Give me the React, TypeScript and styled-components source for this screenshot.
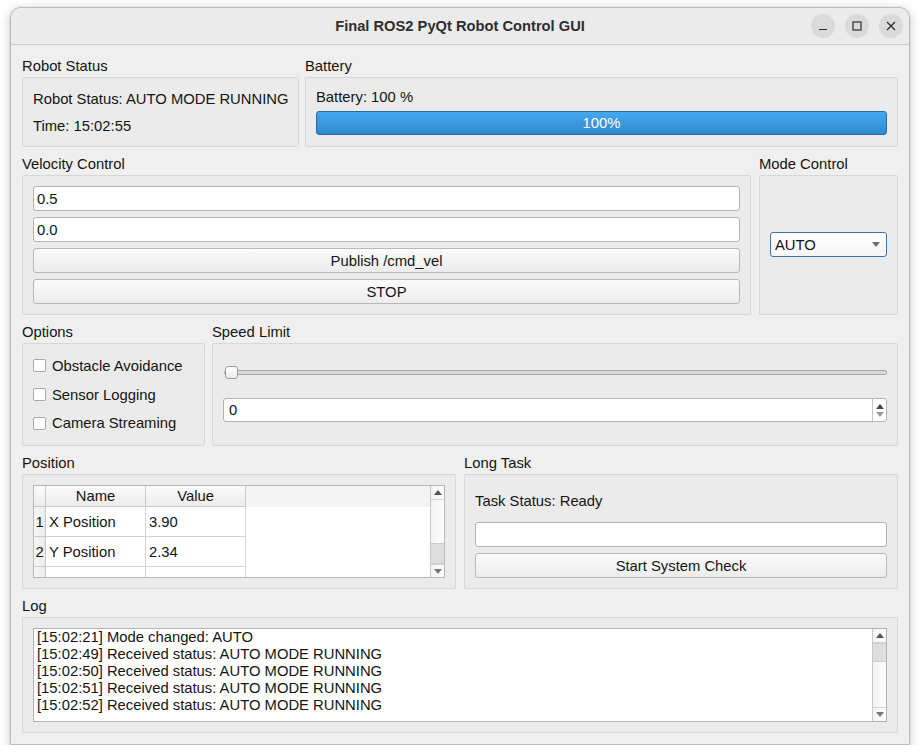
import React from "react";
import styled, { createGlobalStyle } from "styled-components";

const FONT = `"Liberation Sans", Arial, sans-serif`;

const Global = createGlobalStyle`
  html, body { margin: 0; padding: 0; background: #ffffff; }
  body { font-family: ${FONT}; font-size: 14.8px; color: #141414; }
  * { box-sizing: border-box; }
`;

const Window = styled.div`
  margin: 7px 0 0 10px;
  width: 900px;
  border: 1px solid #bcbcbc;
  border-radius: 11px 11px 0 0;
  background: #efefef;
  box-shadow: 0 3px 12px rgba(0, 0, 0, 0.22), 0 0 2px rgba(0, 0, 0, 0.12);
  overflow: hidden;
`;

const TitleBar = styled.div`
  height: 37px;
  border-bottom: 1px solid #c9c9c9;
  background: #ebebeb;
  display: grid;
  grid-template-columns: 1fr auto 1fr;
  align-items: center;
  padding: 0 6px;
`;

const Title = styled.div`
  grid-column: 2;
  font-weight: bold;
  font-size: 14.7px;
  color: #2e2e2e;
`;

const Controls = styled.div`
  grid-column: 3;
  justify-self: end;
  display: flex;
  gap: 10px;
`;

const CtrlButton = styled.div`
  width: 24px;
  height: 24px;
  border-radius: 50%;
  background: #dadada;
  display: flex;
  align-items: center;
  justify-content: center;
`;

const Content = styled.div`
  padding: 12px 11px 11px;
  display: flex;
  flex-direction: column;
  gap: 8px;
`;

const Row = styled.div<{ $cols: string; $gap: number }>`
  display: grid;
  grid-template-columns: ${(p) => p.$cols};
  column-gap: ${(p) => p.$gap}px;
`;

const Group = styled.div`
  display: grid;
  grid-template-rows: 20px auto;
  min-width: 0;
`;

const GroupTitle = styled.div`
  line-height: 18px;
  height: 20px;
  white-space: nowrap;
`;

const Frame = styled.div<{ $h: number }>`
  height: ${(p) => p.$h}px;
  border: 1px solid #d7d7d7;
  border-radius: 2px;
  background: #ebebeb;
  padding: 10px;
  display: flex;
  flex-direction: column;
`;

const StatusFrame = styled(Frame)`
  gap: 5px;
`;

const TextLine = styled.div<{ $lh: number }>`
  line-height: ${(p) => p.$lh}px;
  white-space: nowrap;
`;

const Progress = styled.div`
  margin-top: 5px;
  height: 24px;
  border: 1px solid #2a6aa2;
  border-radius: 3px;
  background: linear-gradient(to bottom, #45a8ef, #2f8ad1);
  color: #ffffff;
  display: flex;
  align-items: center;
  justify-content: center;
`;

const VelocityFrame = styled(Frame)`
  gap: 6px;
`;

const LineEdit = styled.div`
  height: 25px;
  flex: none;
  border: 1px solid #b3b3b3;
  border-radius: 3px;
  background: #ffffff;
  padding-left: 3px;
  display: flex;
  align-items: center;
`;

const PushButton = styled.button`
  height: 25px;
  flex: none;
  border: 1px solid #b8b8b8;
  border-radius: 3px;
  background: linear-gradient(to bottom, #fbfbfb, #ececec);
  font-family: inherit;
  font-size: inherit;
  color: #141414;
  padding: 0;
`;

const ModeFrame = styled(Frame)`
  justify-content: center;
  padding: 0 10px;
`;

const Combo = styled.div`
  width: 117px;
  height: 25px;
  margin-top: -1px;
  border: 1px solid #3a76b3;
  border-radius: 3px;
  background: linear-gradient(to bottom, #ffffff, #f6f6f6);
  display: flex;
  align-items: center;
  justify-content: space-between;
  padding: 0 6px 0 4px;
`;

const OptionsFrame = styled(Frame)`
  gap: 5px;
`;

const CheckRow = styled.div`
  height: 24px;
  display: flex;
  align-items: center;
  white-space: nowrap;
`;

const CheckBox = styled.span`
  width: 13px;
  height: 13px;
  border: 1px solid #a9a9a9;
  border-radius: 2px;
  background: #ffffff;
  margin-right: 6px;
  flex: none;
`;

const SliderArea = styled.div`
  height: 36px;
  display: flex;
  align-items: center;
  padding-left: 1px;
`;

const Groove = styled.div`
  position: relative;
  flex: 1;
  height: 5px;
  border: 1px solid #a9a9a9;
  border-radius: 2px;
  background: #d9d9d9;
`;

const Handle = styled.div`
  position: absolute;
  left: 0;
  top: -5px;
  width: 13px;
  height: 13px;
  border: 1px solid #9e9e9e;
  border-radius: 3px;
  background: linear-gradient(to bottom, #ffffff, #ececec);
`;

const SpinBox = styled.div`
  margin-top: 8px;
  height: 24px;
  border: 1px solid #b3b3b3;
  border-radius: 3px;
  background: #ffffff;
  display: flex;
`;

const SpinText = styled.div`
  flex: 1;
  padding-left: 5px;
  display: flex;
  align-items: center;
`;

const SpinButtons = styled.div`
  width: 14px;
  border-left: 1px solid #c4c4c4;
  display: flex;
  flex-direction: column;
  align-items: center;
  justify-content: center;
  gap: 3px;
`;

const TableBox = styled.div`
  height: 93px;
  border: 1px solid #b8b8b8;
  background: #ffffff;
  display: flex;
  overflow: hidden;
`;

const TableGrid = styled.div`
  flex: 1;
  display: grid;
  grid-template-columns: 12px 100px 100px 1fr;
  grid-template-rows: 21px 30px 30px 30px;
  overflow: hidden;
`;

const HeaderCell = styled.div<{ $fill?: boolean }>`
  background: ${(p) =>
    p.$fill ? "#f4f4f4" : "linear-gradient(to bottom, #fbfbfb, #ececec)"};
  border-right: ${(p) => (p.$fill ? "none" : "1px solid #c9c9c9")};
  border-bottom: ${(p) => (p.$fill ? "none" : "1px solid #c9c9c9")};
  display: flex;
  align-items: center;
  justify-content: center;
`;

const RowHeader = styled.div`
  background: linear-gradient(to right, #f7f7f7, #ececec);
  border-right: 1px solid #c9c9c9;
  border-bottom: 1px solid #c9c9c9;
  display: flex;
  align-items: center;
  justify-content: center;
`;

const Cell = styled.div<{ $empty?: boolean }>`
  background: #ffffff;
  border-right: ${(p) => (p.$empty ? "none" : "1px solid #d3d3d3")};
  border-bottom: ${(p) => (p.$empty ? "none" : "1px solid #d3d3d3")};
  padding-left: 3px;
  display: flex;
  align-items: center;
  white-space: nowrap;
`;

const ScrollTrack = styled.div`
  width: 14px;
  flex: none;
  border-left: 1px solid #c9c9c9;
  background: linear-gradient(to right, #f3f3f3, #fdfdfd);
  display: flex;
  flex-direction: column;
`;

const ScrollArrow = styled.div<{ $down?: boolean }>`
  height: 14px;
  flex: none;
  display: flex;
  align-items: center;
  justify-content: center;
  border-top: ${(p) => (p.$down ? "1px solid #d2d2d2" : "none")};
  border-bottom: ${(p) => (p.$down ? "none" : "1px solid #d2d2d2")};
`;

const ScrollSpace = styled.div`
  flex: 1;
  display: flex;
  flex-direction: column;
`;

const ScrollHandle = styled.div<{ $top: number; $h: number }>`
  margin-top: ${(p) => p.$top}px;
  height: ${(p) => p.$h}px;
  background: #dedede;
  border-top: 1px solid #cdcdcd;
  border-bottom: 1px solid #cdcdcd;
`;

const TaskFrame = styled(Frame)`
  padding: 15px 10px 10px;
`;

const TaskLabel = styled.div`
  line-height: 22px;
  margin-bottom: 10px;
`;

const TaskButton = styled(PushButton)`
  margin-top: 6px;
`;

const LogBox = styled.div`
  height: 94px;
  border: 1px solid #b3b3b3;
  background: #ffffff;
  display: flex;
`;

const LogText = styled.div`
  flex: 1;
  padding-left: 3px;
  line-height: 17px;
  white-space: nowrap;
  overflow: hidden;
`;

const Arrow = ({ down, color = "#555" }: { down?: boolean; color?: string }) => (
  <svg width="8" height="5" viewBox="0 0 8 5">
    <polygon points={down ? "0,0 8,0 4,5" : "0,5 8,5 4,0"} fill={color} />
  </svg>
);

const Scrollbar = ({ top, h }: { top: number; h: number }) => (
  <ScrollTrack>
    <ScrollArrow>
      <Arrow />
    </ScrollArrow>
    <ScrollSpace>
      <ScrollHandle $top={top} $h={h} />
    </ScrollSpace>
    <ScrollArrow $down>
      <Arrow down color="#777" />
    </ScrollArrow>
  </ScrollTrack>
);

const logLines = [
  "[15:02:21] Mode changed: AUTO",
  "[15:02:49] Received status: AUTO MODE RUNNING",
  "[15:02:50] Received status: AUTO MODE RUNNING",
  "[15:02:51] Received status: AUTO MODE RUNNING",
  "[15:02:52] Received status: AUTO MODE RUNNING",
];

export default function App() {
  return (
    <>
      <Global />
      <Window>
        <TitleBar>
          <Title>Final ROS2 PyQt Robot Control GUI</Title>
          <Controls>
            <CtrlButton>
              <svg width="10" height="10" viewBox="0 0 10 10">
                <line x1="1" y1="8.5" x2="9" y2="8.5" stroke="#2e2e2e" strokeWidth="1.2" />
              </svg>
            </CtrlButton>
            <CtrlButton>
              <svg width="10" height="10" viewBox="0 0 10 10">
                <rect x="1" y="1" width="8" height="8" fill="none" stroke="#2e2e2e" strokeWidth="1.2" />
              </svg>
            </CtrlButton>
            <CtrlButton>
              <svg width="10" height="10" viewBox="0 0 10 10">
                <path d="M1 1 L9 9 M9 1 L1 9" stroke="#2e2e2e" strokeWidth="1.3" />
              </svg>
            </CtrlButton>
          </Controls>
        </TitleBar>
        <Content>
          <Row $cols="277px 1fr" $gap={6}>
            <Group>
              <GroupTitle>Robot Status</GroupTitle>
              <StatusFrame $h={70}>
                <TextLine $lh={22}>Robot Status: AUTO MODE RUNNING</TextLine>
                <TextLine $lh={22}>Time: 15:02:55</TextLine>
              </StatusFrame>
            </Group>
            <Group>
              <GroupTitle>Battery</GroupTitle>
              <Frame $h={70}>
                <TextLine $lh={18}>Battery: 100 %</TextLine>
                <Progress>100%</Progress>
              </Frame>
            </Group>
          </Row>
          <Row $cols="1fr 139px" $gap={8}>
            <Group>
              <GroupTitle>Velocity Control</GroupTitle>
              <VelocityFrame $h={140}>
                <LineEdit>0.5</LineEdit>
                <LineEdit>0.0</LineEdit>
                <PushButton>Publish /cmd_vel</PushButton>
                <PushButton>STOP</PushButton>
              </VelocityFrame>
            </Group>
            <Group>
              <GroupTitle>Mode Control</GroupTitle>
              <ModeFrame $h={140}>
                <Combo>
                  <span>AUTO</span>
                  <Arrow down color="#6e6e6e" />
                </Combo>
              </ModeFrame>
            </Group>
          </Row>
          <Row $cols="183px 1fr" $gap={7}>
            <Group>
              <GroupTitle>Options</GroupTitle>
              <OptionsFrame $h={103}>
                <CheckRow>
                  <CheckBox />
                  Obstacle Avoidance
                </CheckRow>
                <CheckRow>
                  <CheckBox />
                  Sensor Logging
                </CheckRow>
                <CheckRow>
                  <CheckBox />
                  Camera Streaming
                </CheckRow>
              </OptionsFrame>
            </Group>
            <Group>
              <GroupTitle>Speed Limit</GroupTitle>
              <Frame $h={103}>
                <SliderArea>
                  <Groove>
                    <Handle />
                  </Groove>
                </SliderArea>
                <SpinBox>
                  <SpinText>0</SpinText>
                  <SpinButtons>
                    <Arrow color="#444" />
                    <Arrow down color="#9a9a9a" />
                  </SpinButtons>
                </SpinBox>
              </Frame>
            </Group>
          </Row>
          <Row $cols="1fr 1fr" $gap={8}>
            <Group>
              <GroupTitle>Position</GroupTitle>
              <Frame $h={115}>
                <TableBox>
                  <TableGrid>
                    <HeaderCell />
                    <HeaderCell>Name</HeaderCell>
                    <HeaderCell>Value</HeaderCell>
                    <HeaderCell $fill />
                    <RowHeader>1</RowHeader>
                    <Cell>X Position</Cell>
                    <Cell>3.90</Cell>
                    <Cell $empty />
                    <RowHeader>2</RowHeader>
                    <Cell>Y Position</Cell>
                    <Cell>2.34</Cell>
                    <Cell $empty />
                    <RowHeader />
                    <Cell />
                    <Cell />
                    <Cell $empty />
                  </TableGrid>
                  <Scrollbar top={43} h={21} />
                </TableBox>
              </Frame>
            </Group>
            <Group>
              <GroupTitle>Long Task</GroupTitle>
              <TaskFrame $h={115}>
                <TaskLabel>Task Status: Ready</TaskLabel>
                <LineEdit />
                <TaskButton>Start System Check</TaskButton>
              </TaskFrame>
            </Group>
          </Row>
          <Group>
            <GroupTitle>Log</GroupTitle>
            <Frame $h={116}>
              <LogBox>
                <LogText>
                  {logLines.map((l, i) => (
                    <div key={i}>{l}</div>
                  ))}
                </LogText>
                <Scrollbar top={0} h={19} />
              </LogBox>
            </Frame>
          </Group>
        </Content>
      </Window>
    </>
  );
}
